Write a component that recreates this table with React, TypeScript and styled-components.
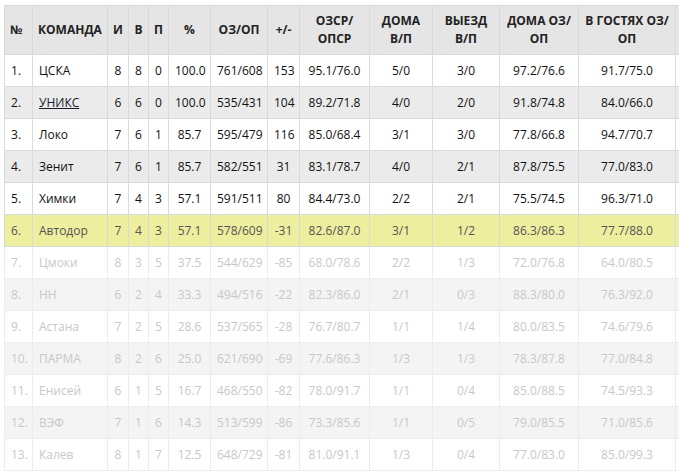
import React from "react";
import styled, { createGlobalStyle } from "styled-components";

const GlobalStyle = createGlobalStyle`
  html, body {
    margin: 0;
    padding: 0;
    overflow: hidden;
    background: #fff;
    font-family: "Open Sans", "Liberation Sans", sans-serif;
  }
`;

type Row = {
  team: string;
  g: number;
  w: number;
  l: number;
  pct: string;
  pts: string;
  diff: number;
  avg: string;
  home: string;
  away: string;
  homePts: string;
  awayPts: string;
  link?: boolean;
};

const rows: Row[] = [
  { team: "ЦСКА", g: 8, w: 8, l: 0, pct: "100.0", pts: "761/608", diff: 153, avg: "95.1/76.0", home: "5/0", away: "3/0", homePts: "97.2/76.6", awayPts: "91.7/75.0" },
  { team: "УНИКС", g: 6, w: 6, l: 0, pct: "100.0", pts: "535/431", diff: 104, avg: "89.2/71.8", home: "4/0", away: "2/0", homePts: "91.8/74.8", awayPts: "84.0/66.0", link: true },
  { team: "Локо", g: 7, w: 6, l: 1, pct: "85.7", pts: "595/479", diff: 116, avg: "85.0/68.4", home: "3/1", away: "3/0", homePts: "77.8/66.8", awayPts: "94.7/70.7" },
  { team: "Зенит", g: 7, w: 6, l: 1, pct: "85.7", pts: "582/551", diff: 31, avg: "83.1/78.7", home: "4/0", away: "2/1", homePts: "87.8/75.5", awayPts: "77.0/83.0" },
  { team: "Химки", g: 7, w: 4, l: 3, pct: "57.1", pts: "591/511", diff: 80, avg: "84.4/73.0", home: "2/2", away: "2/1", homePts: "75.5/74.5", awayPts: "96.3/71.0" },
  { team: "Автодор", g: 7, w: 4, l: 3, pct: "57.1", pts: "578/609", diff: -31, avg: "82.6/87.0", home: "3/1", away: "1/2", homePts: "86.3/86.3", awayPts: "77.7/88.0" },
  { team: "Цмоки", g: 8, w: 3, l: 5, pct: "37.5", pts: "544/629", diff: -85, avg: "68.0/78.6", home: "2/2", away: "1/3", homePts: "72.0/76.8", awayPts: "64.0/80.5" },
  { team: "НН", g: 6, w: 2, l: 4, pct: "33.3", pts: "494/516", diff: -22, avg: "82.3/86.0", home: "2/1", away: "0/3", homePts: "88.3/80.0", awayPts: "76.3/92.0" },
  { team: "Астана", g: 7, w: 2, l: 5, pct: "28.6", pts: "537/565", diff: -28, avg: "76.7/80.7", home: "1/1", away: "1/4", homePts: "80.0/83.5", awayPts: "74.6/79.6" },
  { team: "ПАРМА", g: 8, w: 2, l: 6, pct: "25.0", pts: "621/690", diff: -69, avg: "77.6/86.3", home: "1/3", away: "1/3", homePts: "78.3/87.8", awayPts: "77.0/84.8" },
  { team: "Енисей", g: 6, w: 1, l: 5, pct: "16.7", pts: "468/550", diff: -82, avg: "78.0/91.7", home: "1/1", away: "0/4", homePts: "85.0/88.5", awayPts: "74.5/93.3" },
  { team: "ВЭФ", g: 7, w: 1, l: 6, pct: "14.3", pts: "513/599", diff: -86, avg: "73.3/85.6", home: "1/1", away: "0/5", homePts: "79.0/85.5", awayPts: "71.0/85.6" },
  { team: "Калев", g: 8, w: 1, l: 7, pct: "12.5", pts: "648/729", diff: -81, avg: "81.0/91.1", home: "1/3", away: "0/4", homePts: "77.0/83.0", awayPts: "85.0/99.3" },
];

const widths = [28, 75, 21, 20, 20, 42, 57, 32, 70, 63, 67, 79, 97, 80];

type Variant = "top" | "current" | "out";

const Page = styled.div`
  padding: 5px 0 0 4px;
  width: 675px;
  overflow: hidden;
`;

const Table = styled.table`
  border-collapse: collapse;
  table-layout: fixed;
  width: ${widths.reduce((a, b) => a + b, 0)}px;
  font-size: 12px;
`;

const Head = styled.th<{ $left?: boolean }>`
  background: #e5e5e5;
  border: 1px solid #d5dcdc;
  height: 48px;
  padding: 0 5px;
  font-weight: 700;
  font-size: 12px;
  line-height: 18px;
  color: #222;
  text-transform: uppercase;
  text-align: ${(p) => (p.$left ? "left" : "center")};
`;

const Line = styled.tr<{ $variant: Variant; $odd: boolean }>`
  background: ${(p) =>
    p.$variant === "current"
      ? "#eeee9f"
      : p.$variant === "out"
      ? p.$odd
        ? "#fff"
        : "#f4f4f4"
      : p.$odd
      ? "#fff"
      : "#ebebeb"};
  color: ${(p) =>
    p.$variant === "current" ? "#555" : p.$variant === "out" ? "#c8c8c8" : "#111"};
`;

const Cell = styled.td<{ $variant: Variant; $left?: boolean }>`
  height: 31px;
  padding: 0 6px;
  white-space: nowrap;
  border: 1px solid ${(p) => (p.$variant === "out" ? "#ececec" : "#d5dcdc")};
  text-align: ${(p) => (p.$left ? "left" : "center")};
`;

const TeamLink = styled.a`
  color: #1a1a2a;
  text-decoration: underline;
`;

const headers = [
  "№",
  "Команда",
  "И",
  "В",
  "П",
  "%",
  "ОЗ/ОП",
  "+/-",
  "ОЗСР/ ОПСР",
  "Дома В/П",
  "Выезд В/П",
  "Дома ОЗ/ ОП",
  "В гостях ОЗ/ ОП",
  "",
];

export default function App() {
  return (
    <Page>
      <GlobalStyle />
      <Table>
        <colgroup>
          {widths.map((w, i) => (
            <col key={i} style={{ width: w }} />
          ))}
        </colgroup>
        <thead>
          <tr>
            {headers.map((h, i) => (
              <Head key={i} $left={i < 2}>
                {h === "ОЗСР/ ОПСР" ? (
                  <>
                    ОЗСР/
                    <br />
                    ОПСР
                  </>
                ) : (
                  h
                )}
              </Head>
            ))}
          </tr>
        </thead>
        <tbody>
          {rows.map((r, i) => {
            const v: Variant = i < 5 ? "top" : i === 5 ? "current" : "out";
            const cells = [
              r.g,
              r.w,
              r.l,
              r.pct,
              r.pts,
              r.diff,
              r.avg,
              r.home,
              r.away,
              r.homePts,
              r.awayPts,
              "",
            ];
            return (
              <Line key={r.team} $variant={v} $odd={i % 2 === 0}>
                <Cell $variant={v} $left>
                  {i + 1}.
                </Cell>
                <Cell $variant={v} $left>
                  {r.link ? <TeamLink href="#">{r.team}</TeamLink> : r.team}
                </Cell>
                {cells.map((c, j) => (
                  <Cell key={j} $variant={v}>
                    {c}
                  </Cell>
                ))}
              </Line>
            );
          })}
        </tbody>
      </Table>
    </Page>
  );
}
